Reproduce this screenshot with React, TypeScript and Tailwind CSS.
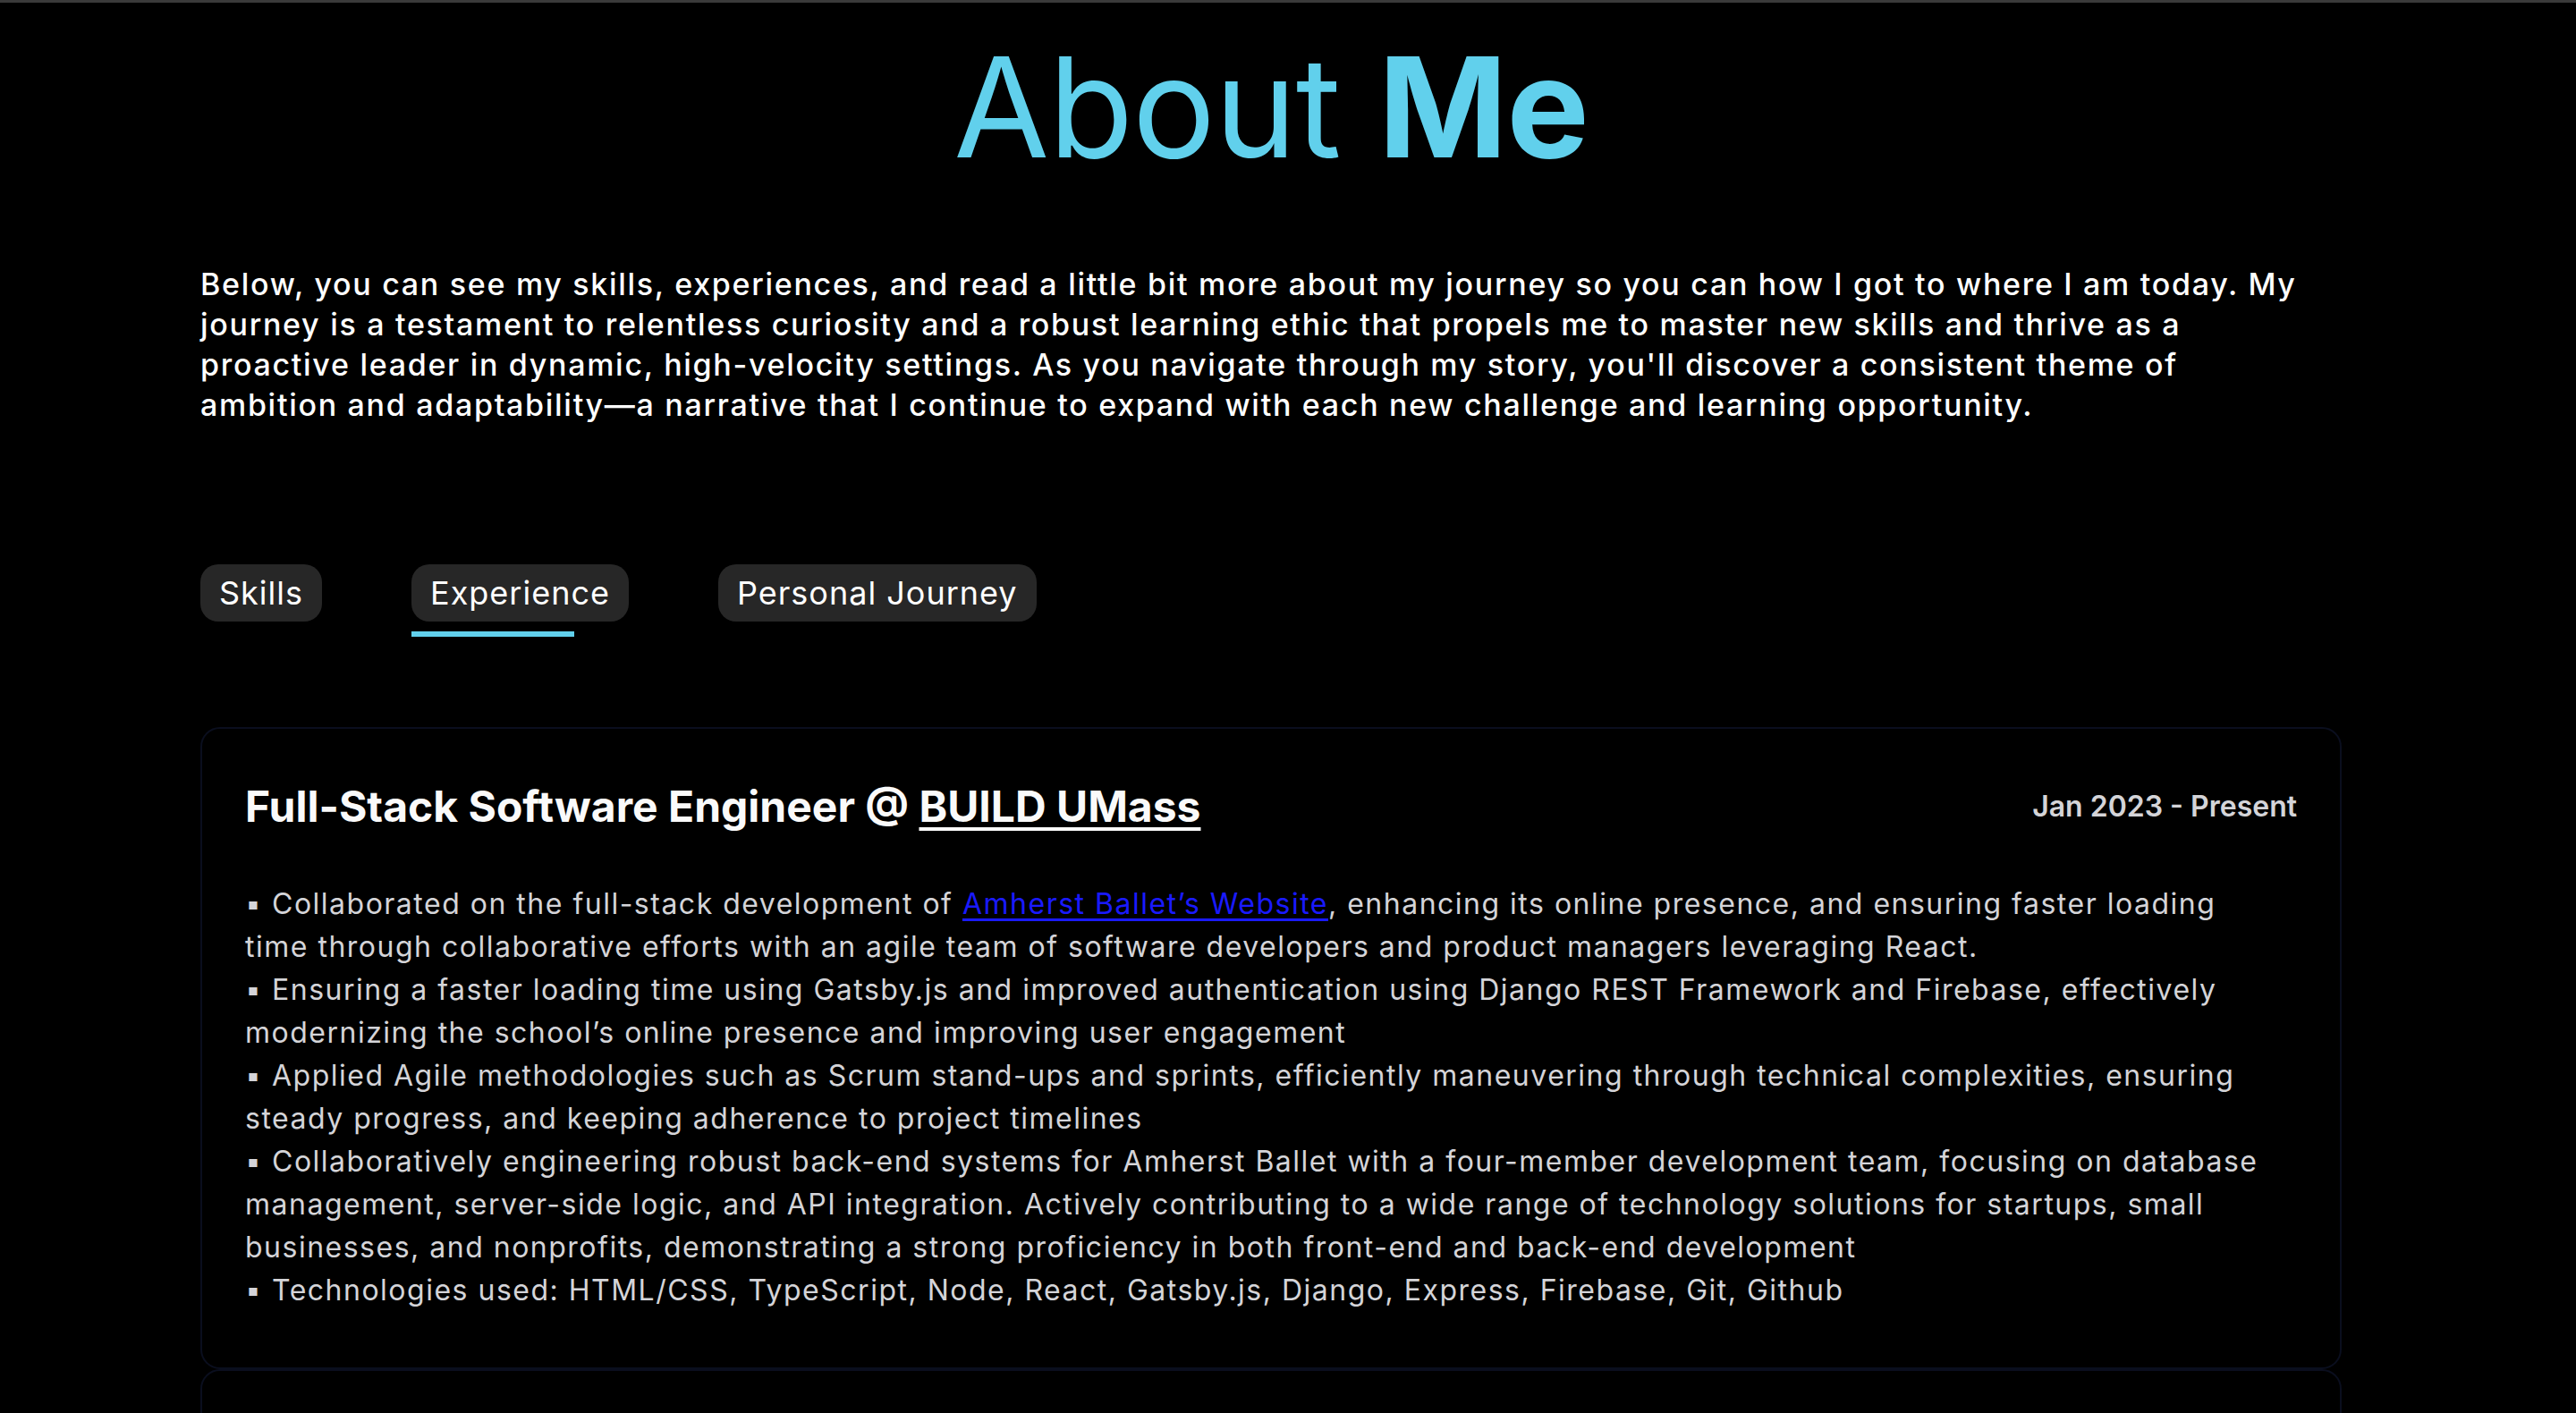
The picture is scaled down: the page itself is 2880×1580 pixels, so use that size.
import React, { useState } from 'react';

const tabs = ['Skills', 'Experience', 'Personal Journey'];

const experiences = [
  {
    id: 1,
    role: 'Full-Stack Software Engineer @ ',
    org: 'BUILD UMass',
    dates: 'Jan 2023 - Present',
  },
  {
    id: 2,
    role: 'Software Engineering Intern @ ',
    org: 'Company',
    dates: 'Jun 2022 - Aug 2022',
  },
];

const AboutMe = () => {
  const [activeTab, setActiveTab] = useState('Experience');

  return (
    <section className="min-h-screen bg-black border-t-[3px] border-[#3a3a3a] font-['Inter',sans-serif]">
      <div className="ml-[224px] w-[2394px]">
        <h1 className="pt-[39px] text-center text-[155px] leading-none tracking-[-1px] text-[#61d0ec]">
          About <span className="font-bold">Me</span>
        </h1>

        <p className="mt-[98px] max-w-[2360px] text-[34px] font-medium leading-[45px] tracking-[1.7px] text-white">
          Below, you can see my skills, experiences, and read a little bit more about my journey so you can how I got to where I am today. My
          journey is a testament to relentless curiosity and a robust learning ethic that propels me to master new skills and thrive as a
          proactive leader in dynamic, high-velocity settings. As you navigate through my story, you'll discover a consistent theme of
          ambition and adaptability—a narrative that I continue to expand with each new challenge and learning opportunity.
        </p>

        <div className="mt-[156px] flex gap-[100px]">
          {tabs.map((tab) => (
            <div key={tab} className="flex flex-col">
              <button
                className="h-[64px] rounded-[20px] bg-[#272727] px-[21px] text-[36px] tracking-[1px] text-white"
                onClick={() => setActiveTab(tab)}
              >
                {tab}
              </button>
              <div
                className={
                  activeTab === tab
                    ? 'mt-[11px] h-[6px] w-3/4 bg-[#61d0ec]'
                    : 'mt-[11px] h-[6px] w-3/4 bg-transparent'
                }
              />
            </div>
          ))}
        </div>

        <div className="mt-[101px] flex flex-col">
          {experiences.map((exp) => (
            <div
              key={exp.id}
              className="rounded-[22px] border-2 border-[#0a0e1e] px-12 pt-[58px] pb-[62px]"
            >
              <div className="flex items-center justify-between">
                <h3 className="text-[48px] font-bold leading-[58px] text-[#fafafa]">
                  {exp.role}
                  <a href="#" className="underline underline-offset-[6px]">
                    {exp.org}
                  </a>
                </h3>
                <span className="text-[32px] font-semibold text-[#d4d4d8]">{exp.dates}</span>
              </div>

              <p className="mt-[56px] max-w-[2270px] text-[32px] leading-[48px] tracking-[1.5px] text-[#d4d4d8]">
                ▪ Collaborated on the full-stack development of{' '}
                <a href="#" className="text-[#1a1aff] underline underline-offset-[5px]">
                  Amherst Ballet’s Website
                </a>
                , enhancing its online presence, and ensuring faster loading time through collaborative efforts with an agile team of
                software developers and product managers leveraging React.
                <br />
                ▪ Ensuring a faster loading time using Gatsby.js and improved authentication using Django REST Framework and Firebase,
                effectively modernizing the school’s online presence and improving user engagement
                <br />
                ▪ Applied Agile methodologies such as Scrum stand-ups and sprints, efficiently maneuvering through technical complexities,
                ensuring steady progress, and keeping adherence to project timelines
                <br />
                ▪ Collaboratively engineering robust back-end systems for Amherst Ballet with a four-member development team, focusing on
                database management, server-side logic, and API integration. Actively contributing to a wide range of technology solutions
                for startups, small businesses, and nonprofits, demonstrating a strong proficiency in both front-end and back-end development
                <br />
                ▪ Technologies used: HTML/CSS, TypeScript, Node, React, Gatsby.js, Django, Express, Firebase, Git, Github
              </p>
            </div>
          ))}
        </div>
      </div>
    </section>
  );
};

export default function App() {
  return <AboutMe />;
}
